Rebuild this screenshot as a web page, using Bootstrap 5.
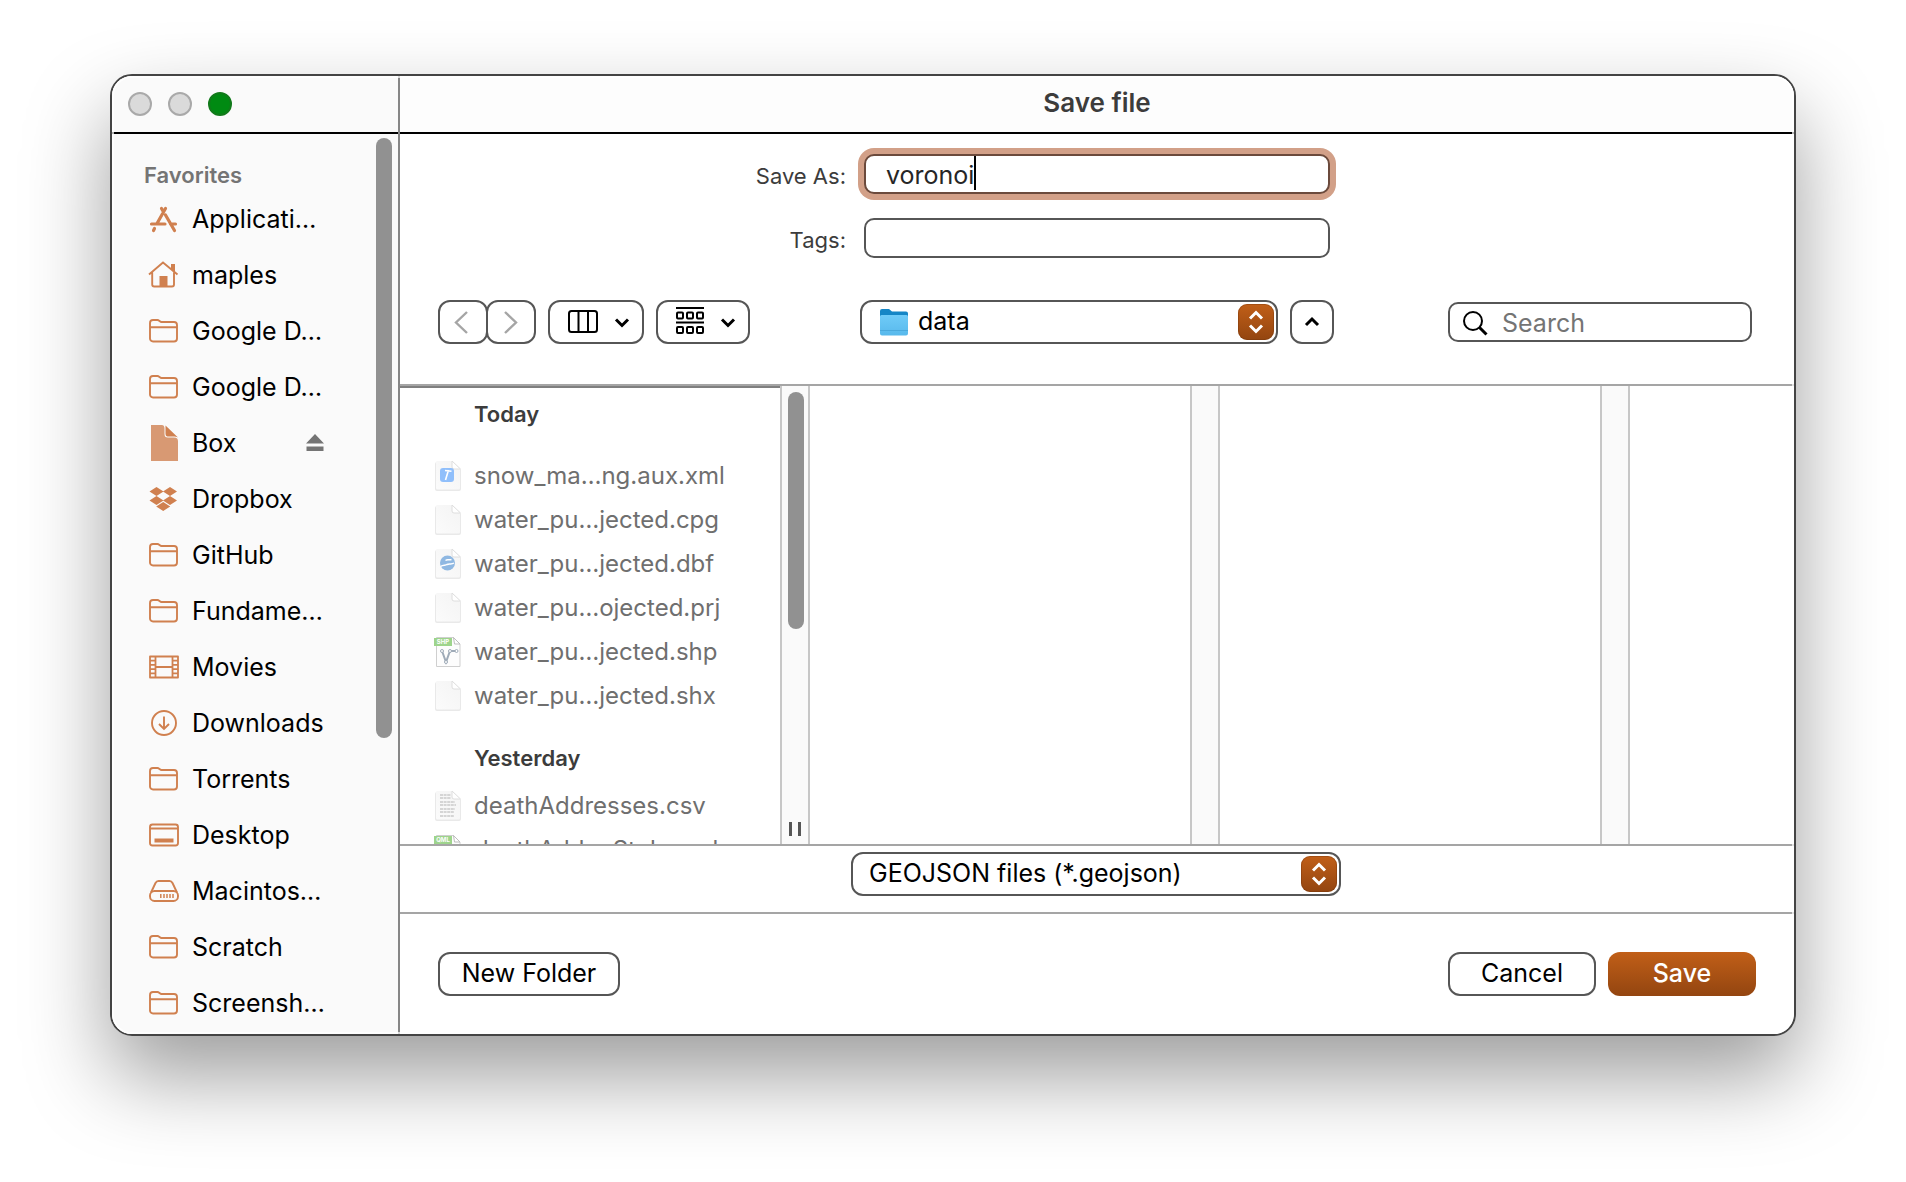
<!DOCTYPE html>
<html lang="en">
<head>
<meta charset="utf-8">
<meta name="viewport" content="width=device-width, initial-scale=1">
<title>Save file</title>
<link href="https://cdn.jsdelivr.net/npm/bootstrap@5.3.0/dist/css/bootstrap.min.css" rel="stylesheet">
<style>
  :root { --line: #a5a5a5; --edge: #565656; --accent: #d0804f; }
  body { font-family: Inter, "Noto Sans", sans-serif; font-size: 25px; line-height: 32px; color: #000; background: #fff; padding: 74px 110px 146px; }
  svg { display: block; flex: none; }

  .sheet { border: 2px solid #444; border-radius: 22px; background: #fff; overflow: hidden; position: relative; }
  .sheet-shadow { border-radius: 22px; box-shadow: 0 40px 84px rgba(0,0,0,.39); }
  .sheet::after { content: ""; position: absolute; inset: 0; border: 2px solid rgba(255,255,255,.7); border-radius: 20px; pointer-events: none; }

  .side { width: 288px; background: #fafafa; border-right: 2px solid #868686; }
  .bar { height: 58px; border-bottom: 2px solid #000; }
  .bar-title { background: #fdfdfd; font-size: 26px; font-weight: 600; color: #3c3c3c; padding-bottom: 2px; }
  .light { width: 24px; height: 24px; padding: 0; border: 2px solid #a9a9a9; border-radius: 50%; background: #dadada; }
  .light-zoom { border-color: #117a1a; background: #008a12; }

  .side-body { padding: 27px 22px 0 32px; }
  .side-head { font-size: 22px; line-height: 28px; font-weight: 600; color: #747474; margin: 0 0 2px; }
  .place { height: 56px; gap: 13px; padding: 0 20px 0 3px; color: #000; text-decoration: none; }
  .place-icon { width: 32px; height: 40px; color: var(--accent); }
  .eject { border: 0; background: none; padding: 0; color: #747474; margin-left: auto; margin-right: 43px; }
  .thumb { position: absolute; width: 16px; border-radius: 8px; background: #919191; }
  .thumb-side { top: 4px; right: 6px; height: 600px; }
  .thumb-files { top: 6px; left: 6px; height: 237px; }

  .fields { padding: 20px 0 0; gap: 24px; }
  .field-row { display: grid; grid-template-columns: 1fr 466px 1fr; align-items: center; column-gap: 18px; }
  .field-row label { text-align: right; font-size: 22px; color: #3c3c3c; padding-top: 4px; }
  .box { width: 100%; height: 40px; border: 2px solid var(--edge); border-radius: 10px; background: #fff; padding: 2px 20px 0; font-size: 25px; color: #262626; outline: 0; }
  .box-active { box-shadow: 0 0 0 6px #d2a088; border-color: #6b4a3c; }
  .caret { position: absolute; left: 110px; top: 2px; width: 2px; height: 34px; background: #000; }

  .tools { padding: 42px 38px 40px; display: grid; grid-template-columns: 1fr 474px 1fr; align-items: center; }
  .key { height: 44px; border: 2px solid var(--edge); border-radius: 12px; background: #fff; color: #000; padding: 0; display: flex; align-items: center; justify-content: center; line-height: 32px; }
  .key-nav { width: 50px; color: #a5a5a5; }
  .key-nav svg { margin-right: 2px; }
  .key-nav + .key-nav { margin-left: -2px; }
  .key-view { width: 96px; gap: 16px; padding-left: 6px; }
  .key-group { width: 94px; }
  .key-up { width: 44px; }
  .pick { appearance: none; width: 100%; height: 44px; border: 2px solid var(--edge); border-radius: 12px; background: #fff; color: #000; padding: 0 50px 2px 16px; }
  .pick-folder { padding-left: 56px; }
  .pick-icon { position: absolute; left: 19px; top: 8px; pointer-events: none; }
  .pick-knob { position: absolute; right: 4px; top: 4px; width: 36px; height: 36px; border-radius: 9px; background: linear-gradient(#c15f18, #934510); box-shadow: inset 0 0 0 1px rgba(110,50,10,.35); display: flex; align-items: center; justify-content: center; pointer-events: none; }
  .find { width: 304px; }
  .find .box { padding-left: 52px; color: #747474; }
  .find .box::placeholder { color: #747474; opacity: 1; }
  .find svg { position: absolute; left: 14px; top: 8px; }

  .browser { height: 462px; border-top: 2px solid var(--line); border-bottom: 2px solid var(--line); overflow: hidden; }
  .pane { flex: 0 0 380px; overflow: hidden; }
  .pane-files { border-top: 2px solid #7f7f7f; padding-left: 34px; }
  .gutter { flex: 0 0 30px; border: 2px solid #c7c7c7; border-width: 0 2px; background: #fafafa; position: relative; }
  .grip { position: absolute; bottom: 8px; left: 7px; width: 12px; height: 14px; border: 3px solid #565656; border-width: 0 3px; }
  .day { font-size: 22px; line-height: 28px; font-weight: 600; color: #3c3c3c; margin: 0 0 0 40px; }
  .docs { padding: 26px 0; }
  .docs-next { padding-top: 12px; }
  .doc { height: 44px; font-size: 24px; gap: 12px; color: #6f6f6f; white-space: nowrap; }

  .format { height: 66px; padding: 6px 2px 6px 0; }
  .format-box { width: 490px; }
  .actions { border-top: 2px solid var(--line); padding: 38px; height: 122px; }
  .actions .key { padding-bottom: 2px; }
  .key-action { width: 148px; }
  .key-folder { width: 182px; }
  .key-save { border-color: transparent; background: linear-gradient(#c15f18, #934510) border-box; color: #fff; font-weight: 500; }
</style>
</head>
<body>
<svg width="0" height="0" class="position-absolute" aria-hidden="true">
  <defs>
    <linearGradient id="paper" x1="0" y1="1" x2="1" y2="0"><stop offset="0" stop-color="#fbfbfb"/><stop offset="1" stop-color="#f4f4f4"/></linearGradient>
    <linearGradient id="blue" x1="0" y1="0" x2="0" y2="1"><stop offset="0" stop-color="#6fcbf8"/><stop offset="1" stop-color="#58b9ec"/></linearGradient>
    <symbol id="i-folder" viewBox="0 0 32 40"><path d="M3 12a3 3 0 0 1 3-3h4.500c1.500 0 2.500 2 4 2H27a3 3 0 0 1 3 3v13.500a3 3 0 0 1-3 3H6a3 3 0 0 1-3-3zM3 16.200h27" fill="none" stroke="currentColor" stroke-width="1.900"/></symbol>
    <symbol id="i-apps" viewBox="0 0 32 40"><path d="M18.500 9.500L10 24.500M14.500 9.500l2 3.500M18.500 16l9 15.500M4.500 25h13.500M23.500 25h5M7.500 29.500L6.500 31.500" fill="none" stroke="currentColor" stroke-width="3.200" stroke-linecap="round"/></symbol>
    <symbol id="i-home" viewBox="0 0 32 40"><path d="M2 19.500L16 7.500 30.500 19.500M5.200 17.500V29.500a2 2 0 0 0 2 2H25a2 2 0 0 0 2-2V17.500M25.500 14.500V10" fill="none" stroke="currentColor" stroke-width="1.900"/><path d="M24 9h4v8l-4-3zM12.500 21h8v11h-8z" fill="currentColor"/></symbol>
    <symbol id="i-doc" viewBox="0 0 32 40"><path d="M4 2h10c3 0 3.500 1.500 3.500 4v5c0 2.500 1 3.500 3.500 3.500h6c3 0 4 1.500 4 4V38H4z" fill="#d89973"/><path d="M18.500 2.500L31 14.500c-1.500-1-3-1-5-1h-4c-2.500 0-3.500-.5-3.500-3z" fill="currentColor"/></symbol>
    <symbol id="i-dropbox" viewBox="0 0 32 40"><path d="M9.500 8l7 4.500-7 4.500-7-4.500zM23 8l7 4.500-7 4.500-7-4.500zM9.500 17l7 4.500-7 4.500-7-4.500zM23 17l7 4.500-7 4.500-7-4.500zM16.200 23l7 4.500-7 4.500-7-4.500z" fill="currentColor"/></symbol>
    <symbol id="i-film" viewBox="0 0 32 40"><path d="M3 9.500h28v21H3zM8.500 9.500v21M25.500 9.500v21M8.500 20h17M3 13.700h5.500M3 17.900h5.500M3 22.100h5.500M3 26.300h5.500M25.500 13.700H31M25.500 17.900H31M25.500 22.100H31M25.500 26.300H31" fill="none" stroke="currentColor" stroke-width="1.800" stroke-linejoin="round"/></symbol>
    <symbol id="i-down" viewBox="0 0 32 40"><circle cx="17" cy="20" r="12" fill="none" stroke="currentColor" stroke-width="1.900"/><path d="M17 13.500v12M12 21l5 5 5-5" fill="none" stroke="currentColor" stroke-width="1.900"/></symbol>
    <symbol id="i-desk" viewBox="0 0 32 40"><rect x="3" y="9.500" width="28" height="21" rx="2.500" fill="none" stroke="currentColor" stroke-width="1.900"/><path d="M3 13.500h28" stroke="currentColor" stroke-width="1.900"/><rect x="7.500" y="23.500" width="19" height="4" fill="currentColor"/></symbol>
    <symbol id="i-disk" viewBox="0 0 32 40"><path d="M4 21.500L8.500 12c.6-1.200 1.200-2 3-2h11c1.800 0 2.400.8 3 2L30 21.500" fill="none" stroke="currentColor" stroke-width="1.900"/><rect x="3" y="20" width="28" height="10" rx="4.500" fill="none" stroke="currentColor" stroke-width="1.900"/><path d="M13.800 23v4M17 23v4M20 23v4M23 23v4M26 23v4" stroke="currentColor" stroke-width="1.500"/></symbol>
    <symbol id="d-blank" viewBox="0 0 28 32"><path d="M3 2h16l8 8v19a2 2 0 0 1-2 2H3a2 2 0 0 1-2-2V4a2 2 0 0 1 2-2z" fill="#e9e9e9"/><path d="M3 1h15.500L26 8.500V28a1.500 1.500 0 0 1-1.500 1.500h-21A1.500 1.500 0 0 1 2 28V2.500A1.500 1.500 0 0 1 3 1z" fill="url(#paper)"/><path d="M18 1v6a2 2 0 0 0 2 2h6.500z" fill="#fff" stroke="#dedede"/></symbol>
    <symbol id="d-tag" viewBox="0 0 28 32"><path d="M2.500 1.500h17L26 8v22.500H2.500z" fill="#fdfdfd" stroke="#cfcfcf"/><path d="M19.500 1.500L26 8h-5.500z" fill="#fff" stroke="#bdbdbd"/><rect x="0" y="2" width="18" height="8" fill="#9ed48c"/></symbol>
  </defs>
</svg>

<div class="sheet-shadow">
<main class="sheet d-flex">
  <aside class="side flex-shrink-0 d-flex flex-column">
    <div class="bar d-flex align-items-center">
      <div class="d-flex gap-3 ps-3">
        <button class="light" aria-label="Close"></button>
        <button class="light" aria-label="Minimize"></button>
        <button class="light light-zoom" aria-label="Zoom"></button>
      </div>
    </div>
    <div class="position-relative flex-grow-1">
      <nav class="side-body d-flex flex-column" aria-label="Favorites">
        <h2 class="side-head">Favorites</h2>
        <a href="#" class="place d-flex align-items-center"><svg class="place-icon"><use href="#i-apps"/></svg>Applicati…</a>
        <a href="#" class="place d-flex align-items-center"><svg class="place-icon"><use href="#i-home"/></svg>maples</a>
        <a href="#" class="place d-flex align-items-center"><svg class="place-icon"><use href="#i-folder"/></svg>Google D…</a>
        <a href="#" class="place d-flex align-items-center"><svg class="place-icon"><use href="#i-folder"/></svg>Google D…</a>
        <div class="d-flex align-items-center">
          <a href="#" class="place d-flex align-items-center pe-0"><svg class="place-icon"><use href="#i-doc"/></svg>Box</a>
          <button class="eject" aria-label="Eject Box"><svg width="36" height="20" viewBox="0 0 36 20"><path d="M18 1l9 9.500H9zM9.500 13.500h17v4.500h-17z" fill="currentColor"/></svg></button>
        </div>
        <a href="#" class="place d-flex align-items-center"><svg class="place-icon"><use href="#i-dropbox"/></svg>Dropbox</a>
        <a href="#" class="place d-flex align-items-center"><svg class="place-icon"><use href="#i-folder"/></svg>GitHub</a>
        <a href="#" class="place d-flex align-items-center"><svg class="place-icon"><use href="#i-folder"/></svg>Fundame…</a>
        <a href="#" class="place d-flex align-items-center"><svg class="place-icon"><use href="#i-film"/></svg>Movies</a>
        <a href="#" class="place d-flex align-items-center"><svg class="place-icon"><use href="#i-down"/></svg>Downloads</a>
        <a href="#" class="place d-flex align-items-center"><svg class="place-icon"><use href="#i-folder"/></svg>Torrents</a>
        <a href="#" class="place d-flex align-items-center"><svg class="place-icon"><use href="#i-desk"/></svg>Desktop</a>
        <a href="#" class="place d-flex align-items-center"><svg class="place-icon"><use href="#i-disk"/></svg>Macintos…</a>
        <a href="#" class="place d-flex align-items-center"><svg class="place-icon"><use href="#i-folder"/></svg>Scratch</a>
        <a href="#" class="place d-flex align-items-center"><svg class="place-icon"><use href="#i-folder"/></svg>Screensh…</a>
      </nav>
      <div class="thumb thumb-side"></div>
    </div>
  </aside>

  <section class="flex-grow-1 overflow-hidden">
    <h1 class="bar bar-title d-flex align-items-center justify-content-center m-0">Save file</h1>

    <div class="fields d-flex flex-column">
      <div class="field-row">
        <label for="name">Save As:</label>
        <div class="position-relative d-flex"><input id="name" class="box box-active" type="text" value="voronoi"><span class="caret"></span></div>
      </div>
      <div class="field-row">
        <label for="tags">Tags:</label>
        <input id="tags" class="box" type="text">
      </div>
    </div>

    <div class="tools">
      <div class="d-flex">
        <button class="key key-nav" aria-label="Back"><svg width="24" height="28" viewBox="0 0 24 28"><path d="M17 4L6 14.500 17 25" fill="none" stroke="currentColor" stroke-width="2.400"/></svg></button>
        <button class="key key-nav me-2" aria-label="Forward"><svg width="24" height="28" viewBox="0 0 24 28"><path d="M7 4l11 10.500L7 25" fill="none" stroke="currentColor" stroke-width="2.400"/></svg></button>
        <button class="key key-view ms-1 me-2" aria-label="Column view"><svg width="30" height="24" viewBox="0 0 30 24"><rect x="1" y="1" width="28" height="21" rx="2.500" fill="none" stroke="currentColor" stroke-width="2"/><path d="M10.500 1v21M20 1v21" stroke="currentColor" stroke-width="2"/></svg><svg width="16" height="12" viewBox="0 0 16 12"><path d="M2 3.500l6 6 6-6" fill="none" stroke="currentColor" stroke-width="3"/></svg></button>
        <button class="key key-view key-group ms-1" aria-label="Group by"><svg width="28" height="30" viewBox="0 0 28 30"><path d="M0 1h28M0 15.500h28" stroke="currentColor" stroke-width="2"/><g fill="none" stroke="currentColor" stroke-width="2"><rect x="1" y="5.500" width="6" height="6" rx="1"/><rect x="11" y="5.500" width="6" height="6" rx="1"/><rect x="21" y="5.500" width="6" height="6" rx="1"/><rect x="1" y="20" width="6" height="6" rx="1"/><rect x="11" y="20" width="6" height="6" rx="1"/><rect x="21" y="20" width="6" height="6" rx="1"/></g></svg><svg width="16" height="12" viewBox="0 0 16 12"><path d="M2 3.500l6 6 6-6" fill="none" stroke="currentColor" stroke-width="3"/></svg></button>
      </div>
      <div class="d-flex gap-2">
        <div class="position-relative flex-grow-1 me-1">
          <select class="pick pick-folder" aria-label="Location"><option>data</option></select>
          <svg class="pick-icon" width="30" height="30" viewBox="0 0 30 30"><path d="M1 3a2 2 0 0 1 2-2h7l3 2.500h14a2 2 0 0 1 2 2V12H1z" fill="#1586c6"/><path d="M1 8.500a1.500 1.500 0 0 1 1.500-1.500h25A1.500 1.500 0 0 1 29 8.500V25.500a2 2 0 0 1-2 2H3a2 2 0 0 1-2-2z" fill="url(#blue)"/><path d="M1 22.500h28" stroke="#4aa9dc" stroke-width="1"/></svg>
          <span class="pick-knob"><svg width="16" height="24" viewBox="0 0 16 24"><path d="M2 8.500l6-6 6 6M2 15.500l6 6 6-6" fill="none" stroke="#fff" stroke-width="3"/></svg></span>
        </div>
        <button class="key key-up" aria-label="Collapse"><svg width="16" height="12" viewBox="0 0 16 12"><path d="M2 9l6-6 6 6" fill="none" stroke="currentColor" stroke-width="3"/></svg></button>
      </div>
      <div class="find position-relative ms-auto me-1 d-flex">
        <input class="box" type="search" placeholder="Search" aria-label="Search">
        <svg width="26" height="26" viewBox="0 0 26 26"><circle cx="11" cy="11" r="9" fill="none" stroke="#000" stroke-width="2"/><path d="M17.500 17.500l7 7" stroke="#000" stroke-width="3"/></svg>
      </div>
    </div>

    <div class="browser d-flex">
      <div class="pane pane-files">
        <h2 class="day mt-2 pt-1">Today</h2>
        <div class="docs">
          <div class="doc d-flex align-items-center"><svg width="28" height="32" viewBox="0 0 28 32"><use href="#d-blank"/><rect x="6" y="8" width="14" height="14" rx="3" fill="#90bffb"/><path d="M14.500 10l-3 10M11 10.500l6.500.8" stroke="#fff" stroke-width="1.600"/></svg>snow_ma…ng.aux.xml</div>
          <div class="doc d-flex align-items-center"><svg width="28" height="32"><use href="#d-blank"/></svg>water_pu…jected.cpg</div>
          <div class="doc d-flex align-items-center"><svg width="28" height="32" viewBox="0 0 28 32"><use href="#d-blank"/><circle cx="13.500" cy="15" r="7.500" fill="#8fb8e2"/><path d="M6.500 18.500c3-2.500 4.500-.5 6.500-2 2.500-1.500 4 .5 7-1.500M11.500 12.500c2-1.500 3 0 6-1" fill="none" stroke="#fff" stroke-width="1.500"/></svg>water_pu…jected.dbf</div>
          <div class="doc d-flex align-items-center"><svg width="28" height="32"><use href="#d-blank"/></svg>water_pu…ojected.prj</div>
          <div class="doc d-flex align-items-center"><svg width="28" height="32" viewBox="0 0 28 32"><use href="#d-tag"/><text x="9" y="8" font-size="6" font-weight="700" text-anchor="middle" fill="#fff">SHP</text><path d="M8 15l4 11 4-11h6" fill="none" stroke="#9fabb8" stroke-width="2"/><g fill="#fff" stroke="#9fabb8"><circle cx="8" cy="15" r="1.500"/><circle cx="12" cy="26" r="1.500"/><circle cx="16" cy="15" r="1.500"/><circle cx="22.500" cy="15" r="1.500"/></g></svg>water_pu…jected.shp</div>
          <div class="doc d-flex align-items-center"><svg width="28" height="32"><use href="#d-blank"/></svg>water_pu…jected.shx</div>
        </div>
        <h2 class="day">Yesterday</h2>
        <div class="docs docs-next">
          <div class="doc d-flex align-items-center"><svg width="28" height="32" viewBox="0 0 28 32"><use href="#d-blank"/><path d="M6 5h11M6 8h11M6 12h15M6 15h16M6 19h15M6 22h14M6 26h14" stroke="#d5d5d5" stroke-width="1.800" stroke-dasharray="3 .6"/></svg>deathAddresses.csv</div>
          <div class="doc d-flex align-items-center"><svg width="28" height="32" viewBox="0 0 28 32"><use href="#d-tag"/><text x="9" y="8" font-size="6" font-weight="700" text-anchor="middle" fill="#fff">QML</text></svg>deathAddr…Style.qml</div>
        </div>
      </div>
      <div class="gutter"><div class="thumb thumb-files"></div><div class="grip"></div></div>
      <div class="pane"></div>
      <div class="gutter"></div>
      <div class="pane"></div>
      <div class="gutter"></div>
    </div>

    <div class="format d-flex justify-content-center">
      <div class="format-box position-relative">
        <select class="pick" aria-label="File format"><option>GEOJSON files (*.geojson)</option></select>
        <span class="pick-knob"><svg width="16" height="24" viewBox="0 0 16 24"><path d="M2 8.500l6-6 6 6M2 15.500l6 6 6-6" fill="none" stroke="#fff" stroke-width="3"/></svg></span>
      </div>
    </div>

    <div class="actions d-flex align-items-start">
      <button class="key key-folder">New Folder</button>
      <button class="key key-action ms-auto me-2">Cancel</button>
      <button class="key key-action key-save ms-1">Save</button>
    </div>
  </section>
</main>
</div>
<script src="https://cdn.jsdelivr.net/npm/bootstrap@5.3.0/dist/js/bootstrap.bundle.min.js"></script>
</body>
</html>
